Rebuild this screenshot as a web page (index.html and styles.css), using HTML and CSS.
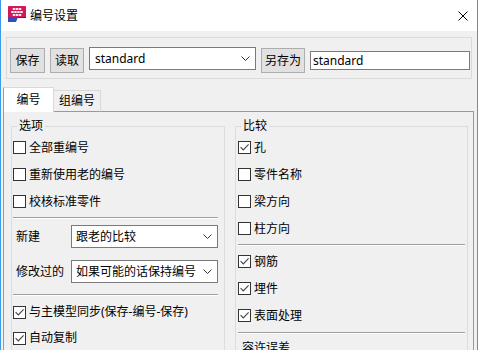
FILE: index.html
```html
<!DOCTYPE html>
<html lang="zh-CN">
<head>
<meta charset="utf-8">
<title>编号设置</title>
<link rel="stylesheet" href="styles.css">
</head>
<body>
<div class="window">
  <div class="titlebar">
    <svg class="app-icon" viewBox="0 0 18 16" width="18" height="16">
      <rect x="0" y="0" width="18" height="12" rx="1" fill="#d3175a"/>
      <g fill="#fff">
        <ellipse cx="6" cy="3" rx="1.5" ry="1.1"/>
        <ellipse cx="9" cy="3" rx="1.5" ry="1.1"/>
        <ellipse cx="12" cy="3" rx="1.5" ry="1.1"/>
        <ellipse cx="4.5" cy="6" rx="1.5" ry="1.1"/>
        <ellipse cx="7.5" cy="6" rx="1.5" ry="1.1"/>
        <ellipse cx="10.5" cy="6" rx="1.5" ry="1.1"/>
        <ellipse cx="13.5" cy="6" rx="1.5" ry="1.1"/>
        <ellipse cx="6" cy="9" rx="1.5" ry="1.1"/>
        <ellipse cx="9" cy="9" rx="1.5" ry="1.1"/>
        <ellipse cx="12" cy="9" rx="1.5" ry="1.1"/>
      </g>
      <polygon points="0,11 10,11 8,16 0,16" fill="#2c4fc6"/>
      <polygon points="10,11 18,11 18,12 9.6,12" fill="#7a1a40"/>
    </svg>
    <span class="title">编号设置</span>
    <svg class="close" viewBox="0 0 10 10" width="10" height="10">
      <path d="M0.5 0.5 L9.5 9.5 M9.5 0.5 L0.5 9.5" stroke="#000" stroke-width="1" fill="none"/>
    </svg>
  </div>

  <div class="client">
    <div class="toolbar">
      <button class="btn w35">保存</button>
      <button class="btn w34">读取</button>
      <div class="combo combo-wide">
        <span class="combo-text latin">standard</span>
        <svg class="chev" viewBox="0 0 9 5" width="9" height="5"><path d="M0.5 0.5 L4.5 4.5 L8.5 0.5" stroke="#333" fill="none"/></svg>
      </div>
      <button class="btn w44">另存为</button>
      <div class="textbox latin">standard</div>
    </div>

    <div class="tabctl">
      <div class="tabs">
        <div class="tab active">编号</div>
        <div class="tab">组编号</div>
        <div class="tab-fill"></div>
      </div>
      <div class="panel">
        <fieldset class="group group-left">
          <legend>选项</legend>
          <div class="row"><span class="cb"></span><span>全部重编号</span></div>
          <div class="row"><span class="cb"></span><span>重新使用老的编号</span></div>
          <div class="row"><span class="cb"></span><span>校核标准零件</span></div>
          <div class="sep sep-top"></div>
          <div class="field-row">
            <span class="field-label">新建</span>
            <div class="combo combo-small">
              <span class="combo-text">跟老的比较</span>
              <svg class="chev" viewBox="0 0 9 5" width="9" height="5"><path d="M0.5 0.5 L4.5 4.5 L8.5 0.5" stroke="#333" fill="none"/></svg>
            </div>
          </div>
          <div class="field-row">
            <span class="field-label">修改过的</span>
            <div class="combo combo-small">
              <span class="combo-text">如果可能的话保持编号</span>
              <svg class="chev" viewBox="0 0 9 5" width="9" height="5"><path d="M0.5 0.5 L4.5 4.5 L8.5 0.5" stroke="#333" fill="none"/></svg>
            </div>
          </div>
          <div class="sep sep-mid"></div>
          <div class="row row26 first-after"><span class="cb checked"></span><span>与主模型同步(保存-编号-保存)</span></div>
          <div class="row row26"><span class="cb checked"></span><span>自动复制</span></div>
        </fieldset>

        <fieldset class="group group-right">
          <legend>比较</legend>
          <div class="row"><span class="cb checked"></span><span>孔</span></div>
          <div class="row"><span class="cb"></span><span>零件名称</span></div>
          <div class="row"><span class="cb"></span><span>梁方向</span></div>
          <div class="row"><span class="cb"></span><span>柱方向</span></div>
          <div class="sep sep-top"></div>
          <div class="row first-after-r"><span class="cb checked"></span><span>钢筋</span></div>
          <div class="row"><span class="cb checked"></span><span>埋件</span></div>
          <div class="row"><span class="cb checked"></span><span>表面处理</span></div>
          <div class="sep sep-low"></div>
          <div class="sub-label">容许误差</div>
        </fieldset>
      </div>
    </div>
  </div>
</div>
</body>
</html>
```

FILE: styles.css
```css
* {
  box-sizing: border-box;
  margin: 0;
  padding: 0;
}

html, body {
  width: 478px;
  height: 350px;
  overflow: hidden;
}

body {
  font-family: "Noto Sans", "Noto Sans CJK SC", sans-serif;
  font-size: 12px;
  line-height: 16px;
  color: #000;
  background: #f0f0f0;
}

.window {
  width: 478px;
  height: 350px;
  border-left: 1px solid #3c9be6;
  border-right: 1px solid #3c9be6;
  display: flex;
  flex-direction: column;
  overflow: hidden;
  background: #f0f0f0;
}

/* Title bar */
.titlebar {
  height: 31px;
  flex: none;
  background: #fff;
  display: flex;
  align-items: center;
}

.app-icon {
  align-self: flex-start;
  margin: 6px 0 0 7px;
  flex: none;
}

.title {
  margin-left: 4px;
}

.close {
  margin-left: auto;
  margin-right: 9px;
  flex: none;
}

/* Client */
.client {
  flex: 1;
  display: flex;
  flex-direction: column;
  padding-top: 6px;
  min-height: 0;
}

.toolbar {
  flex: none;
  height: 42px;
  margin: 0 5px;
  border: 1px solid #dadada;
  display: flex;
  align-items: flex-start;
  gap: 5px;
  padding: 9px 0 0 3px;
}

.btn {
  height: 25px;
  margin-top: 1px;
  background: #e1e1e1;
  border: 1px solid #adadad;
  font: inherit;
  color: #000;
  text-align: center;
  padding: 0;
}

.w35 { width: 35px; }
.w34 { width: 34px; }
.w44 { width: 44px; }

.latin {
  font-family: "Noto Sans", sans-serif;
}

.combo {
  background: #fff;
  border: 1px solid #7a7a7a;
  display: flex;
  align-items: center;
  padding-left: 4px;
}

.combo-text {
  flex: 1;
  white-space: nowrap;
  overflow: hidden;
}

.combo .chev {
  flex: none;
  margin-right: 5px;
}

.combo-wide {
  width: 167px;
  height: 23px;
  padding-left: 5px;
}

.textbox {
  width: 160px;
  height: 19px;
  margin-top: 4px;
  background: #fff;
  border: 1px solid #7a7a7a;
  padding-left: 2px;
  line-height: 17px;
}

/* Tab control */
.tabctl {
  flex: 1;
  min-height: 0;
  margin: 8px 3px 0 2px;
  display: flex;
  flex-direction: column;
}

.tabs {
  flex: none;
  height: 25px;
  display: flex;
  align-items: flex-end;
}

.tab {
  height: 22px;
  width: 47px;
  border: 1px solid #d9d9d9;
  border-left: none;
  border-bottom: 1px solid #999;
  background: #f0f0f0;
  text-align: center;
  line-height: 20px;
}

.tab.active {
  width: 51px;
  height: 25px;
  border: 1px solid #d9d9d9;
  border-left-color: #999;
  border-bottom: none;
  background: #fff;
  line-height: 24px;
}

.tab-fill {
  flex: 1;
  border-bottom: 1px solid #999;
}

.panel {
  flex: 1;
  border: 1px solid #999;
  border-top: none;
  background: #f0f0f0;
  display: flex;
  gap: 10px;
  padding: 6px 5px 0 7px;
  align-items: flex-start;
}

/* Group boxes */
.group {
  border: 1px solid #dcdcdc;
  padding: 0;
  min-width: 0;
  height: 260px;
}

.group legend {
  margin-left: 5px;
  padding: 0 2px;
  line-height: 16px;
}

.group-left {
  width: 214px;
}

.group-right {
  width: 233px;
}

.row {
  height: 27px;
  display: flex;
  align-items: center;
  padding-left: 1px;
  white-space: nowrap;
}

.group-right .row {
  padding-left: 2px;
}

.row26 {
  height: 26px;
}

.first-after {
  margin-top: 3px;
}

.first-after-r {
  margin-top: 2px;
}

.cb {
  flex: none;
  width: 13px;
  height: 13px;
  border: 1px solid #333;
  background: #fff;
  margin-right: 3px;
  position: relative;
}

.cb.checked::after {
  content: "";
  position: absolute;
  left: 1px;
  top: 1px;
  width: 9px;
  height: 9px;
  background: no-repeat center / 9px 9px url("data:image/svg+xml;utf8,<svg xmlns='http://www.w3.org/2000/svg' viewBox='0 0 9 9'><path d='M0.6 4.2 L3.3 6.9 L8.6 1.4' stroke='%23444' stroke-width='1.1' fill='none'/></svg>");
}

.sep {
  height: 2px;
  border-top: 1px solid #a0a0a0;
  border-bottom: 1px solid #fff;
}

.group-left .sep {
  margin-left: 1px;
  margin-right: 6px;
}

.group-right .sep {
  margin-left: 2px;
  margin-right: 2px;
}

.sep-top {
  margin-top: 2px;
}

.sep-mid {
  margin-top: 5px;
}

.sep-low {
  margin-top: 3px;
}

.field-row {
  height: 35px;
  display: grid;
  grid-template-columns: 55px 147px;
  align-items: center;
  padding-left: 4px;
}

.combo-small {
  height: 23px;
}

.sub-label {
  margin-top: 6px;
  padding-left: 6px;
}
```
